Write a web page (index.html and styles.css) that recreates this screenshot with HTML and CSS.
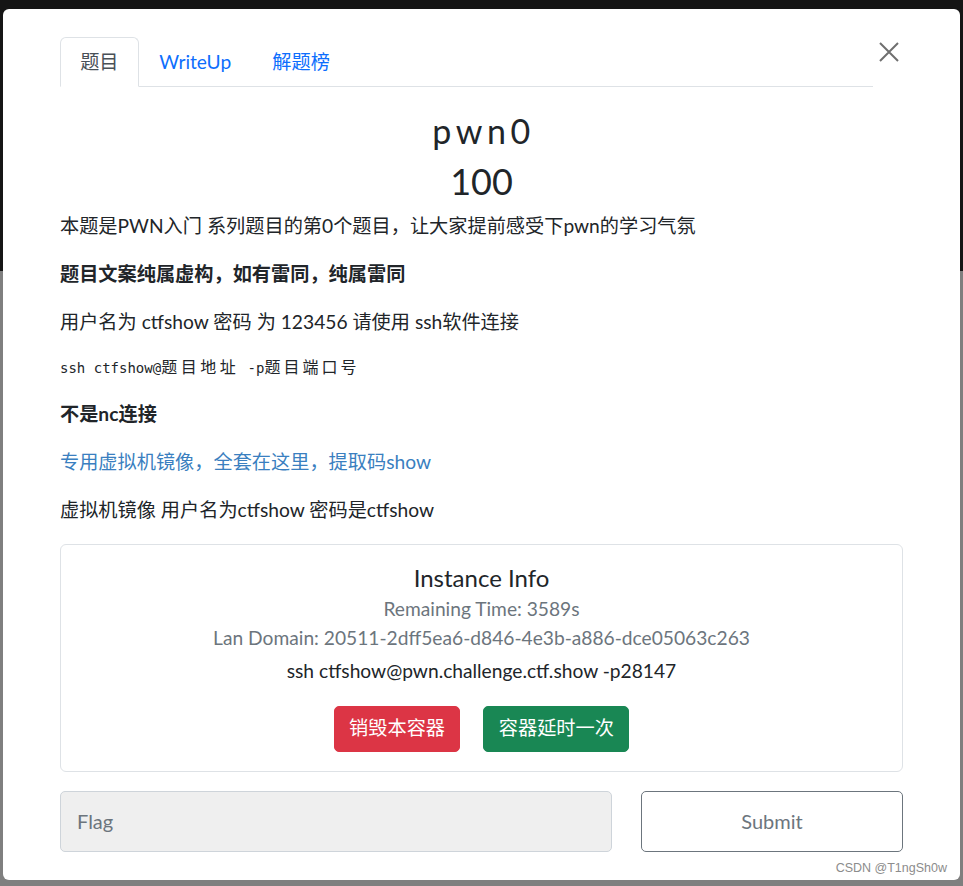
FILE: index.html
```html
<!DOCTYPE html>
<html lang="zh-CN">
<head>
<meta charset="utf-8">
<title>pwn0</title>
<link rel="stylesheet" href="styles.css">
</head>
<body>
<div class="backdrop">
  <div class="modal">
    <div class="modal-header">
      <ul class="nav-tabs">
        <li class="tab active">题目</li>
        <li class="tab">WriteUp</li>
        <li class="tab">解题榜</li>
      </ul>
      <button class="close" aria-label="Close">
        <svg width="20" height="20" viewBox="0 0 20 20"><path d="M1 1 L19 19 M19 1 L1 19" stroke="#6f6f6f" stroke-width="2" fill="none"/></svg>
      </button>
    </div>
    <h3 class="title">pwn0</h3>
    <h3 class="score">100</h3>
    <div class="desc">
      <p>本题是PWN入门 系列题目的第0个题目，让大家提前感受下pwn的学习气氛</p>
      <p><strong>题目文案纯属虚构，如有雷同，纯属雷同</strong></p>
      <p>用户名为 ctfshow 密码 为 123456 请使用 ssh软件连接</p>
      <pre class="code">ssh ctfshow@<span class="wide wide-a">题目地址</span> -p<span class="wide wide-b">题目端口号</span></pre>
      <p><strong>不是nc连接</strong></p>
      <p><a class="link" href="#">专用虚拟机镜像，全套在这里，提取码show</a></p>
      <p>虚拟机镜像 用户名为ctfshow 密码是ctfshow</p>
    </div>
    <div class="card">
      <h5 class="card-title">Instance Info</h5>
      <div class="muted">Remaining Time: 3589s</div>
      <div class="muted">Lan Domain: 20511-2dff5ea6-d846-4e3b-a886-dce05063c263</div>
      <p class="ssh">ssh ctfshow@pwn.challenge.ctf.show -p28147</p>
      <div class="actions">
        <button class="btn btn-danger">销毁本容器</button>
        <button class="btn btn-success">容器延时一次</button>
      </div>
    </div>
    <div class="submit-row">
      <input class="flag-input" type="text" placeholder="Flag" disabled>
      <button class="submit-btn">Submit</button>
    </div>
  </div>
  <div class="watermark">CSDN @T1ngSh0w</div>
</div>
</body>
</html>
```
FILE: styles.css
```css
* { box-sizing: border-box; }
html, body {
  margin: 0;
  padding: 0;
}
body {
  width: 963px;
  height: 886px;
  overflow: hidden;
  background: linear-gradient(#151515 0, #151515 271px, #7f7f7f 271px, #7f7f7f 100%);
  font-family: Lato, "Noto Sans CJK SC", sans-serif;
  color: #212529;
}
.backdrop {
  position: relative;
  height: 886px;
  padding: 9px 3px 0 3px;
}
.modal {
  width: 957px;
  height: 871px;
  background: #fff;
  border-radius: 6px;
  padding: 28px 57px 0 57px;
}
.modal-header {
  display: flex;
  align-items: flex-start;
}
.nav-tabs {
  flex: 1;
  display: flex;
  list-style: none;
  margin: 0 6px 0 0;
  padding: 0;
  border-bottom: 1px solid #dee2e6;
}
.tab {
  font-size: 19.2px;
  line-height: 28.8px;
  padding: 9.6px 19.6px;
  border: 1px solid transparent;
  border-top-left-radius: 6px;
  border-top-right-radius: 6px;
  margin-bottom: -1px;
  color: #0d6efd;
}
.tab.active {
  color: #495057;
  border-color: #dee2e6 #dee2e6 #fff;
  background: #fff;
  padding: 9.6px 19.2px;
}
.close {
  border: 0;
  background: transparent;
  padding: 0;
  margin: 5px 4px 0 0;
  width: 20px;
  height: 20px;
  display: flex;
}
.title {
  font-weight: 400;
  text-align: center;
  font-size: 34px;
  line-height: 36px;
  letter-spacing: 4.5px;
  margin: 26px 0 11px;
  padding-left: 4px;
}
.score {
  font-weight: 400;
  text-align: center;
  font-size: 36px;
  line-height: 43px;
  margin: 0 0 9px;
}
.desc p {
  font-size: 19.2px;
  line-height: 28.8px;
  margin: 0 0 19.2px;
}
.desc strong { font-weight: 700; }
.code {
  font-family: "DejaVu Sans Mono", "Noto Sans CJK SC", monospace;
  font-size: 14px;
  line-height: 25.2px;
  height: 25.2px;
  margin: 0 0 19.2px;
  color: #212529;
}
.wide {
  font-family: "Noto Sans CJK SC", sans-serif;
  font-size: 16px;
  line-height: 1;
}
.wide-a { letter-spacing: 3.5px; }
.wide-b { letter-spacing: 3px; }
.link {
  color: #3a7fc0;
  text-decoration: none;
}
.card {
  border: 1px solid #dee2e6;
  border-radius: 6px;
  padding: 19.2px;
  text-align: center;
}
.card-title {
  font-size: 24px;
  font-weight: 400;
  line-height: 28.8px;
  margin: 0 0 2px;
}
.muted {
  color: #6c757d;
  font-size: 19.2px;
  line-height: 28.8px;
}
.ssh {
  font-size: 19.2px;
  line-height: 28.8px;
  margin: 4px 0 0;
}
.actions {
  display: flex;
  justify-content: center;
  gap: 23px;
  margin-top: 20px;
}
.btn {
  font-family: Lato, "Noto Sans CJK SC", sans-serif;
  font-size: 19.2px;
  line-height: 28.8px;
  padding: 7.6px 14.4px;
  border: 1px solid transparent;
  border-radius: 5px;
  color: #fff;
}
.btn-danger { background: #dc3545; border-color: #dc3545; }
.btn-success { background: #198754; border-color: #198754; }
.submit-row {
  display: flex;
  gap: 29px;
  margin-top: 19px;
}
.flag-input {
  width: 552px;
  height: 61px;
  background: #efefef;
  border: 1px solid #ced4da;
  border-radius: 5px;
  padding: 0 16px;
  font-family: Lato, sans-serif;
  font-size: 20px;
  color: #6c757d;
}
.flag-input::placeholder { color: #6c757d; }
.submit-btn {
  width: 262px;
  height: 61px;
  background: #fff;
  border: 1px solid #6c757d;
  border-radius: 5px;
  font-family: Lato, sans-serif;
  font-size: 20px;
  color: #6c757d;
}
.watermark {
  position: absolute;
  right: 16px;
  top: 861px;
  font-family: "Liberation Sans", sans-serif;
  font-size: 12.5px;
  color: #8c8c8c;
}
```
